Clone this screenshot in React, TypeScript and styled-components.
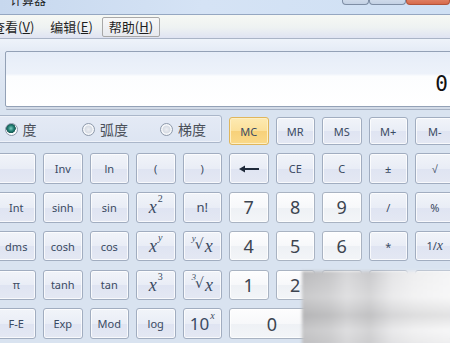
import styled, { createGlobalStyle } from "styled-components";

const GlobalStyle = createGlobalStyle`
  html, body {
    margin: 0;
    padding: 0;
    overflow: hidden;
    background: #d9e3f0;
  }
  body {
    font-family: "Noto Sans", "Noto Sans CJK SC", sans-serif;
  }
`;

const Window = styled.div`
  position: relative;
  width: 450px;
  height: 343px;
  overflow: hidden;
  background: #d9e3f0;
`;

const Frame = styled.div`
  margin-top: -8px;
  display: flex;
  flex-direction: column;
`;

const TitleBar = styled.div`
  height: 22px;
  display: flex;
  align-items: flex-start;
  background: linear-gradient(90deg, #c7d8ee 0%, #d5e3f5 45%, #cfe0f4 100%);
  border-bottom: 1px solid #95a7c1;
`;

const TitleText = styled.span`
  margin-left: 10px;
  font-family: "Noto Sans CJK SC", sans-serif;
  font-size: 12px;
  line-height: 16px;
  color: #1c1c1c;
`;

const Caption = styled.div`
  margin-left: auto;
  display: flex;
  height: 13px;
`;

const CaptionButton = styled.div<{ $close?: boolean; $w: number }>`
  width: ${(p) => p.$w}px;
  height: 13px;
  box-sizing: border-box;
  border: 1px solid ${(p) => (p.$close ? "#b1543b" : "#7e8ea5")};
  border-top: none;
  border-radius: 0 0 4px 4px;
  background: ${(p) =>
    p.$close
      ? "linear-gradient(#e9a58e, #d76a4b)"
      : "linear-gradient(#e4ecf6, #c3d1e4)"};
`;

const MenuBar = styled.div`
  height: 23px;
  display: flex;
  align-items: center;
  gap: 2px;
  margin-left: -15px;
  background: linear-gradient(#f6f8f4 0%, #eef2f2 55%, #dfe3f2 100%);
  border-bottom: 1px solid #aab4c6;
`;

const MenuItem = styled.span<{ $hot?: boolean }>`
  font-family: "Noto Sans CJK SC", sans-serif;
  font-size: 13px;
  line-height: 18px;
  color: #1e1e1e;
  padding: 0 6px;
  border: 1px solid ${(p) => (p.$hot ? "#a8a8a8" : "transparent")};
  border-radius: 2px;
  background: ${(p) => (p.$hot ? "linear-gradient(#f8f8f8, #e7e9ee)" : "none")};

  u {
    text-decoration: underline;
  }
`;

const Body = styled.div`
  padding-top: 12px;
  background: linear-gradient(#eef3fa 0px, #e3eaf5 14px, #d9e3f0 60px);
`;

const Display = styled.div`
  margin-left: 5px;
  margin-right: -20px;
  height: 56px;
  border: 1px solid #93a1b6;
  border-radius: 2px;
  box-shadow: 0 3px 0 -1px #d3dbe7, 0 4px 0 -1px #a7b2c4;
  background: linear-gradient(#e6edf8 0%, #edf2fa 40%, #fcfdfe 45%, #ffffff 100%);
  display: flex;
  align-items: center;
  justify-content: flex-end;
  padding-right: 21px;
  padding-top: 9px;
  box-sizing: border-box;
`;

const Readout = styled.span`
  font-family: "DejaVu Sans Mono", monospace;
  font-size: 21px;
  color: #111;
`;

const Keys = styled.div`
  margin-top: 10px;
  margin-left: -3.5px;
  display: grid;
  grid-template-columns: repeat(10, 39.5px);
  grid-template-rows: 28px repeat(5, 30.5px);
  column-gap: 7px;
  row-gap: 8.25px;
`;

const RadioGroup = styled.div`
  grid-column: 1 / span 5;
  margin: -2px 0 2px;
  border: 1px solid #aab6c9;
  border-radius: 3px;
  background: linear-gradient(#e4eaf5, #dde5f2);
  box-shadow: inset 0 0 0 1px #eef2f9;
  display: grid;
  grid-template-columns: 77.5px 78px 78px;
  padding-left: 7px;
  align-items: center;
`;

const RadioItem = styled.label`
  display: flex;
  align-items: center;
  gap: 5px;
  font-family: "Noto Sans CJK SC", sans-serif;
  font-size: 14px;
  color: #4a4f58;
`;

const RadioDot = styled.span<{ $on?: boolean }>`
  width: 13px;
  height: 13px;
  border-radius: 50%;
  border: 1px solid #8e9aab;
  background: ${(p) =>
    p.$on
      ? "radial-gradient(circle at 45% 40%, #7fd0c2 0, #1f7a70 3px, #1a5a55 4.5px, #ffffff 5px, #e3e8ef 100%)"
      : "radial-gradient(circle at 50% 50%, #eceef2 0, #d7dce4 3.5px, #f8f9fb 4.5px, #e2e6ed 100%)"};
  box-sizing: border-box;
`;

type Tone = "fn" | "digit" | "hot";

const Key = styled.div<{ $tone?: Tone; $span?: number; $rows?: number }>`
  grid-column: span ${(p) => p.$span ?? 1};
  grid-row: span ${(p) => p.$rows ?? 1};
  box-sizing: border-box;
  border: 1px solid
    ${(p) => (p.$tone === "hot" ? "#e0b65c" : p.$tone === "digit" ? "#a9b3c2" : "#a1adc0")};
  border-radius: 3px;
  box-shadow: inset 0 0 0 1px
    ${(p) => (p.$tone === "hot" ? "#fdefc5" : "rgba(255, 255, 255, 0.75)")};
  background: ${(p) =>
    p.$tone === "hot"
      ? "linear-gradient(#fdeab2 0%, #fbe09a 50%, #f7d17a 51%, #fad989 100%)"
      : p.$tone === "digit"
      ? "linear-gradient(#fdfdfe 0%, #f7f8fa 50%, #eef1f5 51%, #f3f5f8 100%)"
      : "linear-gradient(#f1f4f9 0%, #e9edf6 50%, #dfe4f2 51%, #e4e8f3 100%)"};
  display: flex;
  align-items: center;
  justify-content: center;
  font-family: "Noto Sans", sans-serif;
  font-size: ${(p) => (p.$tone === "digit" ? "18px" : "11px")};
  color: ${(p) => (p.$tone === "digit" ? "#3d4550" : "#3a4a62")};
  line-height: 1;
  white-space: nowrap;
`;

const Expr = styled.span`
  position: relative;
  display: inline-flex;
  align-items: flex-start;
  line-height: 1;
`;

const MathX = styled.span<{ $size?: number }>`
  font-family: "Liberation Serif", serif;
  font-style: italic;
  font-size: ${(p) => p.$size ?? 18}px;
  line-height: 1;
  color: #3a4a62;
`;

const Sup = styled.span<{ $italic?: boolean }>`
  font-family: "Liberation Serif", serif;
  font-style: ${(p) => (p.$italic ? "italic" : "normal")};
  font-size: 10px;
  line-height: 1;
  margin-top: -4px;
  margin-left: 1px;
`;

const RootIdx = styled.span`
  font-family: "Liberation Serif", serif;
  font-style: italic;
  font-size: 9px;
  line-height: 1;
  margin-right: -1px;
  margin-top: -3px;
`;

const RootSign = styled.span`
  font-family: "DejaVu Sans", sans-serif;
  font-size: 14px;
  line-height: 1;
  color: #3a4a62;
  margin-right: 1px;
`;

const TenX = styled.span`
  font-family: "Noto Sans", sans-serif;
  font-size: 17px;
  line-height: 1;
  color: #3a4a62;
`;

const Watermark = styled.div`
  position: absolute;
  left: 302px;
  top: 271px;
  width: 150px;
  height: 74px;
  background:
    linear-gradient(180deg, rgba(255,255,255,0) 0%, rgba(255,255,255,0.25) 35%, rgba(170,170,170,0.25) 60%, rgba(255,255,255,0.2) 80%, rgba(210,210,210,0.2) 100%),
    linear-gradient(90deg, #b9b9bb 0%, #c4c4c6 18%, #d6d6d8 30%, #c9c9cb 45%, #e4e4e6 60%, #eeeeef 75%, #f5f5f6 100%);
  filter: blur(1.5px);
`;

const BackArrow = () => (
  <svg width="22" height="8" viewBox="0 0 22 8">
    <path d="M21 4H5" stroke="#1f2a3a" strokeWidth="2" />
    <path d="M1 4L7 0.5V7.5Z" fill="#1f2a3a" />
  </svg>
);

const Root = ({ idx }: { idx: string }) => (
  <Expr>
    <RootIdx>{idx}</RootIdx>
    <RootSign>√</RootSign>
    <MathX>x</MathX>
  </Expr>
);

const Power = ({ exp, italic }: { exp: string; italic?: boolean }) => (
  <Expr>
    <MathX>x</MathX>
    <Sup $italic={italic}>{exp}</Sup>
  </Expr>
);

export default function App() {
  return (
    <Window>
      <GlobalStyle />
      <Frame>
        <TitleBar>
          <TitleText>计算器</TitleText>
          <Caption>
            <CaptionButton $w={27} />
            <CaptionButton $w={37} />
            <CaptionButton $w={44} $close />
          </Caption>
        </TitleBar>
        <MenuBar>
          <MenuItem>
            查看(<u>V</u>)
          </MenuItem>
          <MenuItem>
            编辑(<u>E</u>)
          </MenuItem>
          <MenuItem $hot>
            帮助(<u>H</u>)
          </MenuItem>
        </MenuBar>
        <Body>
          <Display>
            <Readout>0</Readout>
          </Display>
          <Keys>
            <RadioGroup>
              <RadioItem>
                <RadioDot $on />度
              </RadioItem>
              <RadioItem>
                <RadioDot />弧度
              </RadioItem>
              <RadioItem>
                <RadioDot />梯度
              </RadioItem>
            </RadioGroup>
            <Key $tone="hot">MC</Key>
            <Key>MR</Key>
            <Key>MS</Key>
            <Key>M+</Key>
            <Key>M-</Key>

            <Key />
            <Key>Inv</Key>
            <Key>ln</Key>
            <Key>(</Key>
            <Key>)</Key>
            <Key>
              <BackArrow />
            </Key>
            <Key>CE</Key>
            <Key>C</Key>
            <Key>±</Key>
            <Key>√</Key>

            <Key>Int</Key>
            <Key>sinh</Key>
            <Key>sin</Key>
            <Key>
              <Power exp="2" />
            </Key>
            <Key style={{ fontSize: 13 }}>n!</Key>
            <Key $tone="digit">7</Key>
            <Key $tone="digit">8</Key>
            <Key $tone="digit">9</Key>
            <Key>/</Key>
            <Key>%</Key>

            <Key>dms</Key>
            <Key>cosh</Key>
            <Key>cos</Key>
            <Key>
              <Power exp="y" italic />
            </Key>
            <Key>
              <Root idx="y" />
            </Key>
            <Key $tone="digit">4</Key>
            <Key $tone="digit">5</Key>
            <Key $tone="digit">6</Key>
            <Key>*</Key>
            <Key>
              <Expr style={{ alignItems: "baseline" }}>
                1/<MathX $size={14}>x</MathX>
              </Expr>
            </Key>

            <Key>π</Key>
            <Key>tanh</Key>
            <Key>tan</Key>
            <Key>
              <Power exp="3" />
            </Key>
            <Key>
              <Root idx="3" />
            </Key>
            <Key $tone="digit">1</Key>
            <Key $tone="digit">2</Key>
            <Key $tone="digit">3</Key>
            <Key>-</Key>
            <Key $rows={2}>=</Key>

            <Key>F-E</Key>
            <Key>Exp</Key>
            <Key>Mod</Key>
            <Key>log</Key>
            <Key>
              <Expr>
                <TenX>10</TenX>
                <Sup $italic>x</Sup>
              </Expr>
            </Key>
            <Key $tone="digit" $span={2}>
              0
            </Key>
            <Key $tone="digit">.</Key>
            <Key>+</Key>
          </Keys>
        </Body>
      </Frame>
      <Watermark />
    </Window>
  );
}
